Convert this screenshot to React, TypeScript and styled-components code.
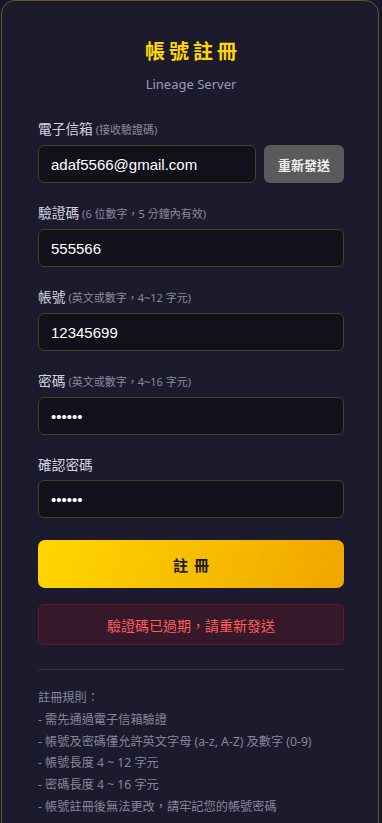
import React from "react";
import styled, { createGlobalStyle } from "styled-components";

const GlobalStyle = createGlobalStyle`
  html, body {
    margin: 0;
    padding: 0;
    background: #16162a;
  }
  * {
    box-sizing: border-box;
  }
`;

const cjk = `"Noto Sans", "Noto Sans CJK TC", sans-serif`;
const latin = `"Liberation Sans", Arial, "Noto Sans CJK TC", sans-serif`;

// Outer card holding the whole form.
const Card = styled.div`
  margin: 0 3px 0 1px;
  background: #1c1b2e;
  border: 1px solid #6a5a1e;
  border-radius: 14px;
  padding: 37px 34px 20px 36px;
  font-family: ${cjk};
  min-height: 830px;
`;

const Title = styled.h1`
  margin: 0;
  text-align: center;
  color: #ffd700;
  font-size: 20px;
  font-weight: 700;
  letter-spacing: 4px;
  text-indent: 4px;
  line-height: 28px;
`;

const Subtitle = styled.div`
  margin-top: 8px;
  text-align: center;
  color: #9a9aae;
  font-size: 13px;
  line-height: 20px;
`;

const Form = styled.div`
  margin-top: 26px;
  display: flex;
  flex-direction: column;
  gap: 21px;
`;

const Field = styled.div`
  display: flex;
  flex-direction: column;
  gap: 6px;
`;

const Label = styled.label`
  color: #d4d4de;
  font-size: 13.7px;
  line-height: 18px;
  white-space: nowrap;
`;

const Hint = styled.span`
  color: #8a8a9c;
  font-size: 11px;
  margin-left: 3px;
`;

const Row = styled.div`
  display: flex;
  gap: 8px;
`;

const Input = styled.input<{ $grow?: boolean }>`
  flex: ${({ $grow }) => ($grow ? "1 1 auto" : "0 0 auto")};
  min-width: 0;
  height: 38px;
  width: 100%;
  background: #11111c;
  border: 1px solid #4a3f1c;
  border-radius: 6px;
  padding: 0 12px;
  color: #ffffff;
  font-family: ${latin};
  font-size: 15px;
  outline: none;
`;

const SendButton = styled.button`
  flex: 0 0 80px;
  height: 38px;
  background: #5a5a5a;
  border: none;
  border-radius: 6px;
  color: #f0f0f0;
  font-family: ${cjk};
  font-size: 13px;
  font-weight: 700;
`;

const SubmitButton = styled.button`
  margin-top: 1px;
  height: 48px;
  width: 100%;
  border: none;
  border-radius: 7px;
  background: linear-gradient(110deg, #ffd700 0%, #f0a500 100%);
  color: #1a1a1a;
  font-family: ${cjk};
  font-size: 15px;
  font-weight: 700;
  letter-spacing: 6px;
  text-indent: 6px;
`;

const ErrorBox = styled.div`
  margin-top: 16px;
  height: 41px;
  display: flex;
  align-items: center;
  justify-content: center;
  background: #35182a;
  border: 1px solid #6b1525;
  border-radius: 6px;
  color: #ff5c5c;
  font-size: 14px;
`;

const Divider = styled.hr`
  margin: 24px 0 0;
  border: none;
  border-top: 1px solid #35354a;
`;

const Rules = styled.div`
  margin-top: 17px;
  color: #85859a;
  font-size: 12.2px;
  line-height: 21.8px;
`;

const fields = [
  { label: "驗證碼", hint: "(6 位數字，5 分鐘內有效)", value: "555566", type: "text" },
  { label: "帳號", hint: "(英文或數字，4~12 字元)", value: "12345699", type: "text" },
  { label: "密碼", hint: "(英文或數字，4~16 字元)", value: "123456", type: "password" },
  { label: "確認密碼", hint: "", value: "123456", type: "password" },
];

const rules = [
  "註冊規則：",
  "- 需先通過電子信箱驗證",
  "- 帳號及密碼僅允許英文字母 (a-z, A-Z) 及數字 (0-9)",
  "- 帳號長度 4 ~ 12 字元",
  "- 密碼長度 4 ~ 16 字元",
  "- 帳號註冊後無法更改，請牢記您的帳號密碼",
];

export default function App() {
  return (
    <>
      <GlobalStyle />
      <Card>
        <Title>帳號註冊</Title>
        <Subtitle>Lineage Server</Subtitle>
        <Form>
          <Field>
            <Label>
              電子信箱<Hint>(接收驗證碼)</Hint>
            </Label>
            <Row>
              <Input $grow type="email" defaultValue="adaf5566@gmail.com" />
              <SendButton>重新發送</SendButton>
            </Row>
          </Field>
          {fields.map((f) => (
            <Field key={f.label}>
              <Label>
                {f.label}
                {f.hint && <Hint>{f.hint}</Hint>}
              </Label>
              <Input type={f.type} defaultValue={f.value} />
            </Field>
          ))}
          <SubmitButton>註冊</SubmitButton>
        </Form>
        <ErrorBox>驗證碼已過期，請重新發送</ErrorBox>
        <Divider />
        <Rules>
          {rules.map((r) => (
            <div key={r}>{r}</div>
          ))}
        </Rules>
      </Card>
    </>
  );
}
